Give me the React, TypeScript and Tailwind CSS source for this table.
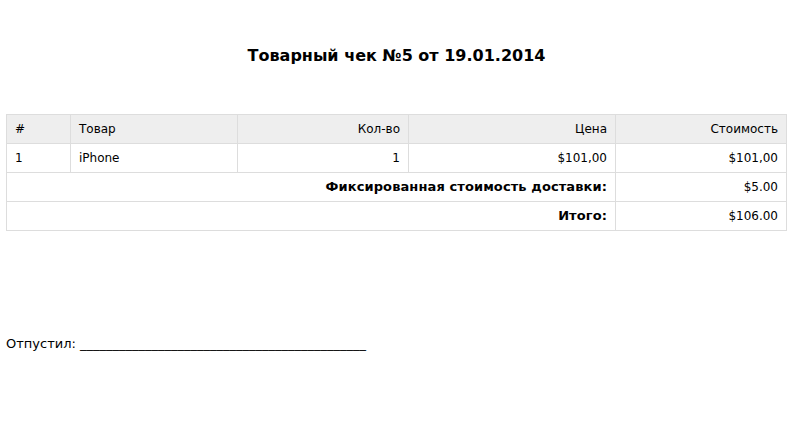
import React from "react";

const cell = "border border-[#dddddd] px-[8px] h-[29px] align-middle";
const bold = "font-bold text-[13px] tracking-[0.1px]";

export default function App() {
  return (
    <div className="w-[806px] h-[440px] bg-white text-black" style={{ fontFamily: '"DejaVu Sans", Verdana, sans-serif' }}>
      <div className="w-[793px] px-[6px]">
        <h1 className="pt-[44px] text-center text-[16px] font-bold leading-[24px]">
          Товарный чек №5 от 19.01.2014
        </h1>

        <table className="mt-[46px] w-full border-collapse text-[12px] leading-[16px]">
          <thead>
            <tr className="bg-[#eeeeee]">
              <th className={`${cell} w-[64px] text-left font-normal`}>#</th>
              <th className={`${cell} w-[167px] text-left font-normal`}>Товар</th>
              <th className={`${cell} w-[171px] text-right font-normal`}>Кол-во</th>
              <th className={`${cell} w-[207px] text-right font-normal`}>Цена</th>
              <th className={`${cell} text-right font-normal`}>Стоимость</th>
            </tr>
          </thead>
          <tbody>
            <tr>
              <td className={`${cell} text-left`}>1</td>
              <td className={`${cell} text-left`}>iPhone</td>
              <td className={`${cell} text-right`}>1</td>
              <td className={`${cell} text-right`}>$101,00</td>
              <td className={`${cell} text-right`}>$101,00</td>
            </tr>
            <tr>
              <td colSpan={4} className={`${cell} text-right ${bold}`}>
                Фиксированная стоимость доставки:
              </td>
              <td className={`${cell} text-right`}>$5.00</td>
            </tr>
            <tr>
              <td colSpan={4} className={`${cell} text-right ${bold}`}>
                Итого:
              </td>
              <td className={`${cell} text-right`}>$106.00</td>
            </tr>
          </tbody>
        </table>

        <p className="mt-[104px] text-[13px] leading-[17px]">
          Отпустил: ____________________________________________
        </p>
      </div>
    </div>
  );
}
